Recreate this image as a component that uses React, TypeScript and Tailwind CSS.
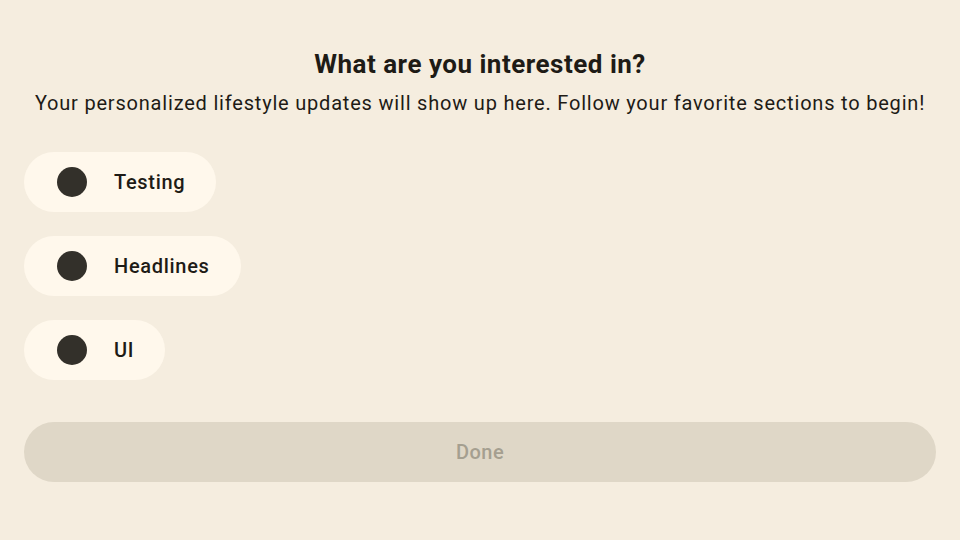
import { useState } from "react";

const topics = ["Testing", "Headlines", "UI"];

function TopicChip({ label }: { label: string }) {
  return (
    <button
      type="button"
      className="flex h-[60px] items-center gap-[27px] self-start rounded-full bg-[#fff8ec] pl-[33px] pr-[31px]"
    >
      <span className="h-[30px] w-[30px] rounded-full bg-[#33302a]" />
      <span className="text-[20px] font-medium tracking-[0.7px] text-[#1e1b16]">
        {label}
      </span>
    </button>
  );
}

export default function App() {
  const [selected] = useState<string[]>([]);

  return (
    <div
      className="flex h-[540px] w-[960px] flex-col bg-[#f5eddf] px-6 pt-[48px]"
      style={{ fontFamily: "Roboto, 'Liberation Sans', sans-serif" }}
    >
      <h1 className="text-center text-[26px] font-bold leading-8 tracking-[0.5px] text-[#1e1b16]">
        What are you interested in?
      </h1>
      <p className="mt-[9px] text-center text-[20px] leading-7 tracking-[0.8px] text-[#1e1b16]">
        Your personalized lifestyle updates will show up here. Follow your
        favorite sections to begin!
      </p>

      <div className="mt-[35px] flex flex-col gap-6">
        {topics.map((t) => (
          <TopicChip key={t} label={t} />
        ))}
      </div>

      <button
        type="button"
        disabled={selected.length === 0}
        className="mt-[42px] h-[60px] w-full rounded-full bg-[#dfd7c7] text-[20px] font-medium tracking-[0.5px] text-[#a59f90]"
      >
        Done
      </button>
    </div>
  );
}
